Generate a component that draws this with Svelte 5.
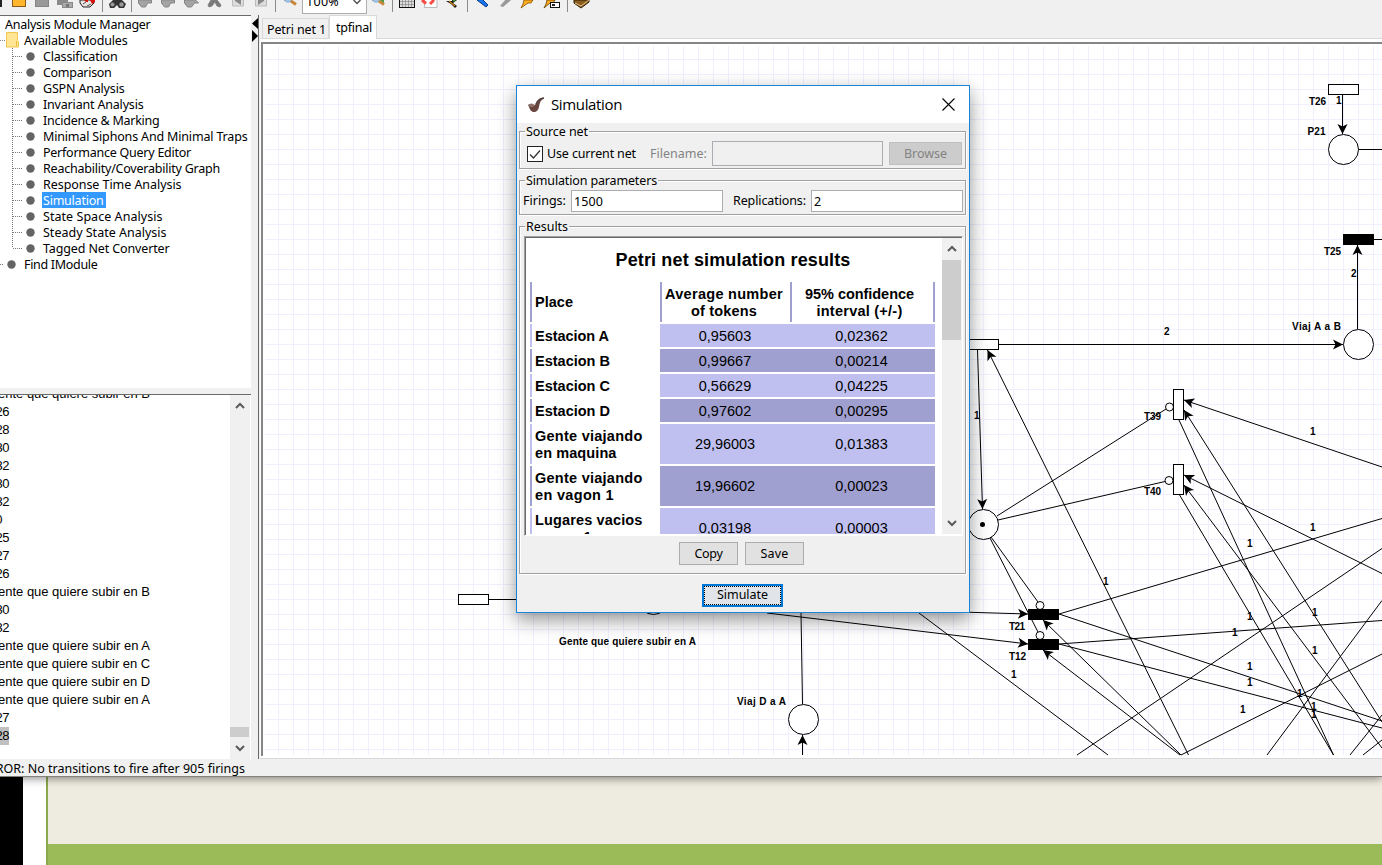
<script>
  // Spreads the letters of a label so that it fills the given width.
  function fit(node, width) {
    const range = document.createRange();
    range.selectNodeContents(node);
    const natural = range.getBoundingClientRect().width;
    node.style.letterSpacing = (width - natural) / node.textContent.length + 'px';
  }

  const modules = [
    ['Classification', 74.5], ['Comparison', 68.5], ['GSPN Analysis', 81.5], ['Invariant Analysis', 100.5],
    ['Incidence & Marking', 116.5], ['Minimal Siphons And Minimal Traps', 204.5], ['Performance Query Editor', 148],
    ['Reachability/Coverability Graph', 177], ['Response Time Analysis', 138.5], ['Simulation', 60.5],
    ['State Space Analysis', 119.5], ['Steady State Analysis', 123.5], ['Tagged Net Converter', 126.5]
  ];

  const q = 'Gente que quiere subir en ';
  const log = [q + 'B', 'T26', 'T28', 'T30', 'T32', 'T30', 'T32', 'T0', 'T25', 'T27', 'T26', q + 'B', 'T30', 'T32',
    q + 'A', q + 'C', q + 'D', q + 'A', 'T27', 'T28'];

  const results = [
    ['Estacion A', '', '0,95603', '0,02362'],
    ['Estacion B', '', '0,99667', '0,00214'],
    ['Estacion C', '', '0,56629', '0,04225'],
    ['Estacion D', '', '0,97602', '0,00295'],
    ['Gente viajando', 'en maquina', '29,96003', '0,01383'],
    ['Gente viajando', 'en vagon 1', '19,96602', '0,00023'],
    ['Lugares vacios', 'vagon 1', '0,03198', '0,00003']
  ];
  const placeWidths = { 'Estacion A': 74, 'Estacion B': 75, 'Estacion C': 75, 'Estacion D': 75, 'Gente viajando': 107.5, 'en maquina': 81.5, 'en vagon 1': 79, 'Lugares vacios': 107.5, 'vagon 1': 57 };

  // Plain arcs: x1, y1, x2, y2
  const lines = [
    [489, 599.5, 517, 599.5], [1358, 149.5, 1382, 149.5], [1374, 239.5, 1382, 239.5],
    [997, 516, 1166, 409], [998, 520, 1165, 481.5], [991, 537, 1038, 602], [990, 538, 1038, 632],
    [1179, 420, 1333.5, 755], [1179, 494, 1333.5, 755], [1059, 614, 1382, 518.5], [1059, 614, 1382, 721],
    [1059, 644, 1382, 728], [1059, 644, 1382, 620.5], [1077, 755, 1382, 548.5], [1181, 755, 1382, 654],
    [1267, 755, 1382, 600.5], [1350, 755, 1382, 715], [1363, 755, 1382, 740], [919, 613, 1108, 755],
    [801, 613, 802.5, 704]
  ];
  // Arcs that end in an arrow head at x2, y2
  const arrows = [
    [1342.5, 94, 1342.5, 134], [1357.5, 329, 1357.5, 245], [999, 344.5, 1343, 344.5], [977.5, 350, 982.5, 509],
    [1188.5, 755, 987.5, 350], [1382, 467, 1184, 400], [1382, 722, 1184, 410], [1382, 573.5, 1184, 475],
    [1382, 748, 1184, 485], [1181, 755, 1043, 620], [1180, 755, 1043, 650], [960, 612, 1028, 614],
    [767, 613, 1028, 644], [802.5, 755, 802.5, 735]
  ];
  const circles = [[1343.5, 149.5], [1358.5, 344.5], [983.5, 524.5], [803.5, 719.5], [653.5, 599.5]];
  const inhibitors = [[1169.5, 407], [1169, 480.5], [1040, 605.5], [1040, 635.5]];
  const boxes = [[1328.5, 84.5, 30, 10], [968.5, 339.5, 30, 10], [458.5, 594.5, 30, 10], [1173.5, 389.5, 10, 30], [1173.5, 464.5, 10, 30]];
  const bars = [[1343, 234], [1028, 609], [1028, 639]];
  const names = [
    ['T26', 1309, 105, 17], ['P21', 1307.5, 135, 18], ['T25', 1324, 255, 17], ['Viaj A a B', 1292, 330, 49],
    ['T39', 1144, 420, 17], ['T40', 1144, 495, 17], ['T21', 1009, 630, 16], ['T12', 1009, 660, 17],
    ['Viaj D a A', 737, 705, 49], ['Gente que quiere subir en A', 559, 645, 137]
  ];
  const weights = [
    ['1', 1336, 104], ['2', 1351, 277], ['2', 1164, 335], ['1', 974, 419], ['1', 1310, 435], ['1', 1310, 531],
    ['1', 1247, 547], ['1', 1103, 585], ['1', 1247, 620], ['1', 1232, 636], ['1', 1312, 616], ['1', 1312, 654],
    ['1', 1247, 670], ['1', 1247, 686], ['1', 1297, 697], ['1', 1311, 710], ['1', 1311, 718], ['1', 1240, 713], ['1', 1011, 678]
  ];
  const heading = ([x1, y1, x2, y2]) => (Math.atan2(y2 - y1, x2 - x1) * 180) / Math.PI;
</script>

<div class="screen">
  <section class="app">
    <header class="toolbar">
      <svg class="tools" width="302" height="14" viewBox="0 0 302 14">
        <path d="M0 0h2v7H0" fill="#222" />
        <rect x="12.5" y="-6" width="13" height="12.5" fill="#ffb52c" stroke="#8a5a18" />
        <rect x="35.5" y="-6" width="13" height="12.5" fill="#999" stroke="#858585" />
        <path d="M57 0h11v2h5v6H62V5h-5z" fill="#8a8a8a" /><path d="M63 3h9v4h-9z" fill="#aaa" /><path d="M66 4h3v3h-3z" fill="#777" />
        <path d="M80 0h14v3l-4 4h-7l-3-4z" fill="#e7e4df" stroke="#222" /><path d="M83 4l3-2m1 4 4-2" stroke="#555" /><path d="M84 0h4v2h-2zM90 0h5v2l-3 2z" fill="#d91010" />
        <path d="M109 4l4-4h9l4 4-2 4h-5l-2-3-3 3h-4z" fill="#333" /><circle cx="112.500" cy="4.500" r="2" fill="#999" /><circle cx="121.500" cy="4.500" r="2.200" fill="#999" />
        <g fill="#a4a4a4" stroke="#858585">
          <path d="M138.500 0h13v3l-4 0-2 4h-4l-3-4zM161.500 0h13v3h-4l-2 4h-4l-3-4zM184.500 0h11l3 3-4 0-3 4h-4l-3-4z" />
          <path d="M211 0h6l4 5-1 2-3-1-2-4-3 4-3 1-1-2z" fill="#777" />
        </g>
        <path d="M232.500 -1v7h11v-7M255.500-1v7h11v-7" fill="#ddd" stroke="#bbb" />
        <path d="M241 0v5l-6-4V0zM258 0v5l6-4V0z" fill="#888" />
        <path d="M284 0q2 3 6 2l2-2z" fill="#b9dcff" stroke="#87a5c4" /><path d="M291 1l5 3.500" stroke="#c98538" stroke-width="3" />
        <path d="M102.500 0v12M131.500 0v12M275.500 0v12" stroke="#8b8b8b" />
      </svg>
      <div class="zoom"><span use:fit={33}>100%</span>
        <svg width="8" height="5" viewBox="0 0 8 5"><path d="M.5 0 4 3.500 7.500 0" fill="none" stroke="#555" stroke-width="1.500" /></svg>
      </div>
      <svg class="tools" width="230" height="14" viewBox="366 0 230 14">
        <path d="M372 0q2 3 6 2l2-2z" fill="#b9dcff" stroke="#87a5c4" /><path d="M379 1l5 3.500" stroke="#c98538" stroke-width="3" /><path d="M380 0h4v3z" fill="#4d9b45" />
        <rect x="399.500" y="-3.500" width="15" height="11" fill="#ddd" stroke="#111" /><path d="M402.500 0v7m3-7v7m3-7v7m3-7v7M400 1.500h14m-14 3h14" stroke="#888" stroke-width=".7" />
        <rect x="424.500" y="-4" width="12.500" height="11.500" fill="#fff" stroke="#bbb" /><path d="M422 0l4 3.500M430 4l4-4" stroke="#fb4b43" stroke-width="3" />
        <path d="M446 1h6V0h5l-4 3 4 3-2 2-4-4z" fill="#111" /><path d="M449 1l6 5" stroke="#cc8428" stroke-width="1.500" /><path d="M452 0h4l-2 2z" fill="#44963b" />
        <path d="M477 0l9 7 2-2-6-6z" fill="#1874e8" stroke="#063c88" />
        <path d="M500 6l6-7h5v1l-8 7z" fill="#999" />
        <path d="M524 0h9l-2 3h-3l-7 5 2-4z" fill="#ffad20" stroke="#815000" stroke-width=".8" />
        <path d="M547 0h8l-2 3h-3l-6 5 2-4z" fill="#ffad20" stroke="#5b3a00" stroke-width=".8" />
        <rect x="550.500" y="2.500" width="9" height="5" fill="#fff" stroke="#111" /><path d="M552 4h3v2h-3z" fill="#222" />
        <path d="M574 0h15v2l-8 6-7-5z" fill="#8a5c1e" stroke="#312009" /><path d="M575 3l6 3 8-6" fill="none" stroke="#e9c98e" />
        <path d="M392.500 0v12M467.500 0v12M567.500 0v12" stroke="#8b8b8b" />
      </svg>
    </header>

    <div class="body">
      <aside class="side">
        <div class="tree">
          <div class="row root"><span use:fit={145.5}>Analysis Module Manager</span></div>
          <div class="row folder">
            <svg width="24" height="16" viewBox="0 0 24 16"><path d="M0 8.500h5" stroke="#888" stroke-dasharray="1 1" /><path d="M6.500.500h11v8l1 1v5.500h-12z" fill="#ffe594" stroke="#efc64e" /><path d="M16.500 9v5" stroke="#edbd35" /></svg>
            <span use:fit={103.5}>Available Modules</span>
          </div>
          {#each modules as [name, width], i}
            <div class="row">
              <svg width="42" height="16" viewBox="0 0 42 16">
                <path d={i === modules.length - 1 ? 'M12.500 0v8' : 'M12.500 0v16'} stroke="#777" stroke-dasharray="1 1" />
                <path d="M13 8.500h9" stroke="#777" stroke-dasharray="1 1" /><circle cx="30.500" cy="8.500" r="4.200" fill="#646464" />
              </svg>
              <span class="module" class:selected={name === 'Simulation'}><span use:fit={width}>{name}</span></span>
            </div>
          {/each}
          <div class="row">
            <svg width="24" height="16" viewBox="0 0 24 16"><path d="M0 8.500h4" stroke="#777" stroke-dasharray="1 1" /><circle cx="11.500" cy="8.500" r="4.200" fill="#646464" /></svg>
            <span use:fit={73.5}>Find IModule</span>
          </div>
        </div>
        <div class="log">
          <div class="entries">
            {#each log as entry, i}
              <div class="entry"><span class:current={i === log.length - 1} use:fit={entry.length > 3 ? 162 : entry.length === 3 ? 21 : 14}>{entry}</span></div>
            {/each}
          </div>
          <div class="scroll">
            <svg width="10" height="7" viewBox="0 0 10 7"><path d="M1 6 5 2 9 6" fill="none" stroke="#5a5a5a" stroke-width="2" /></svg>
            <div class="logthumb"></div>
            <svg width="10" height="7" viewBox="0 0 10 7"><path d="M1 1 5 5 9 1" fill="none" stroke="#5a5a5a" stroke-width="2" /></svg>
          </div>
        </div>
      </aside>

      <div class="splitter">
        <svg width="7" height="26" viewBox="0 0 7 26"><path d="M6 2v11L0 7.500zM0 14v12l6-6z" /></svg>
      </div>

      <main class="work">
        <nav class="tabs">
          <div class="tab"><span use:fit={59}>Petri net 1</span></div>
          <div class="tab active"><span use:fit={36}>tpfinal</span></div>
        </nav>
        <div class="sheet">
          <svg class="net" width="1119" height="712" viewBox="263 44 1119 712">
            <defs>
              <pattern id="grid" x="278" y="59" width="15" height="15" patternUnits="userSpaceOnUse"><path d="M0 .500h15M.500 0v15" stroke="#efefff" /></pattern>
            </defs>
            <rect x="265" y="46" width="1117" height="709" fill="url(#grid)" />
            {#each lines as [x1, y1, x2, y2]}<line {x1} {y1} {x2} {y2} stroke="#000" />{/each}
            {#each arrows as a}
              <line x1={a[0]} y1={a[1]} x2={a[2]} y2={a[3]} stroke="#000" />
              <path d="M0 0-10-5-7.500 0-10 5z" transform="translate({a[2]} {a[3]}) rotate({heading(a)})" />
            {/each}
            {#each circles as [cx, cy]}<circle {cx} {cy} r="15" fill="#fff" stroke="#000" />{/each}
            <circle cx="982.500" cy="524.500" r="2.500" />
            {#each inhibitors as [cx, cy]}<circle {cx} {cy} r="4" fill="#fff" stroke="#000" />{/each}
            {#each boxes as [x, y, width, height]}<rect {x} {y} {width} {height} fill="#fff" stroke="#000" />{/each}
            {#each bars as [x, y]}<rect {x} {y} width="31" height="11" />{/each}
            {#each names as [label, x, y, width]}<text {x} {y} textLength={width}>{label}</text>{/each}
            {#each weights as [label, x, y]}<text {x} {y}>{label}</text>{/each}
          </svg>
        </div>
      </main>
    </div>
    <footer class="status"><span use:fit={264}>ERROR: No transitions to fire after 905 firings</span></footer>
  </section>

  <div class="desktop">
    <div class="dark"></div><div class="page"></div>
    <div class="slide"><div class="green"></div></div>
  </div>

  <div class="dialog">
    <div class="title">
      <svg width="18" height="16" viewBox="0 0 18 16">
        <path d="M1 8 4 6.500 5 9 8 8C10 3 12 .500 17 .500V2C13.500 2.500 12.800 6 12 10 11 14.500 8 16 5 14.500 2.500 13 2.500 10 1 8Z" fill="#69443f" />
        <path d="M1 8l4-1.500 3 1.500-2 2H3z" fill="#8d7069" /><path d="M9 7C11 3 13 1.500 17 1" fill="none" stroke="#4c4544" stroke-width="1.200" />
      </svg>
      <h1 use:fit={71}>Simulation</h1>
      <svg width="13" height="13" viewBox="0 0 13 13"><path d="M.500.500l12 12M12.500.500l-12 12" stroke="#000" stroke-width="1.100" /></svg>
    </div>

    <fieldset class="source">
      <legend><span use:fit={62}>Source net</span></legend>
      <div class="fields">
        <div class="check"><svg width="14" height="14" viewBox="0 0 14 14"><path d="M2 7.500 5.500 11 12 3.500" fill="none" stroke="#333" stroke-width="1.300" /></svg></div>
        <label class="use"><span use:fit={89}>Use current net</span></label>
        <label class="file"><span use:fit={57}>Filename:</span></label>
        <div class="input off"></div>
        <div class="button browse"><span use:fit={43}>Browse</span></div>
      </div>
    </fieldset>

    <fieldset class="params">
      <legend><span use:fit={131}>Simulation parameters</span></legend>
      <div class="fields">
        <label class="firings"><span use:fit={43}>Firings:</span></label>
        <div class="input"><span use:fit={29}>1500</span></div>
        <label class="reps"><span use:fit={73}>Replications:</span></label>
        <div class="input"><span>2</span></div>
      </div>
    </fieldset>

    <fieldset class="results">
      <legend><span use:fit={42}>Results</span></legend>
      <div class="pane">
        <div class="report">
          <h2><span use:fit={235}>Petri net simulation results</span></h2>
          <div class="line head">
            <div class="place"><span use:fit={38}>Place</span></div>
            <div class="cell"><span use:fit={118}>Average number</span><span use:fit={66}>of tokens</span></div>
            <div class="cell last"><span use:fit={109}>95% confidence</span><span use:fit={86}>interval (+/-)</span></div>
          </div>
          {#each results as [a, b, mean, interval], i}
            <div class="line" class:odd={i % 2 === 1} class:tall={b !== ''}>
              <div class="place"><span use:fit={placeWidths[a]}>{a}</span>{#if b}<span use:fit={placeWidths[b]}>{b}</span>{/if}</div>
              <div class="cell"><span use:fit={mean.length * 7.500}>{mean}</span></div>
              <div class="cell last"><span use:fit={52.500}>{interval}</span></div>
            </div>
          {/each}
        </div>
        <div class="bar">
          <svg width="10" height="7" viewBox="0 0 10 7"><path d="M1 6 5 2 9 6" fill="none" stroke="#5a5a5a" stroke-width="2" /></svg>
          <div class="thumb"></div>
          <svg width="10" height="7" viewBox="0 0 10 7"><path d="M1 1 5 5 9 1" fill="none" stroke="#5a5a5a" stroke-width="2" /></svg>
        </div>
      </div>
      <div class="actions">
        <div class="button"><span use:fit={28}>Copy</span></div>
        <div class="button"><span use:fit={28}>Save</span></div>
      </div>
    </fieldset>
    <div class="button simulate"><div class="focus"><span use:fit={51}>Simulate</span></div></div>
  </div>
</div>

<style>
  :global(body) { overflow: hidden; }
  * { box-sizing: border-box; }
  svg { display: block; flex: none; }
  span { white-space: pre; }
  .screen { width: 1382px; height: 865px; position: relative; overflow: hidden; display: flex; flex-direction: column; background: #fff; font: 12.5px/16px "Noto Sans", sans-serif; color: #000; }
  .app { height: 777px; flex: none; display: flex; flex-direction: column; background: #f0f0f0; border-bottom: 1px solid #85827e; box-shadow: 0 1px 9px rgba(0, 0, 0, .5); position: relative; }
  .toolbar { height: 15px; display: flex; align-items: flex-start; }
  .zoom { width: 65px; height: 14px; margin-right: -1px; border: 1px solid #adadad; border-top: 0; background: #fff; display: flex; justify-content: space-between; padding: 0 5px 0 3px; line-height: 3px; overflow: hidden; }
  .body { height: 744px; display: flex; flex: none; }
  .side { width: 251px; display: flex; flex-direction: column; gap: 6px; }
  .tree { height: 373px; background: #fff; border-top: 1px solid #696969; }
  .row { height: 16px; display: flex; align-items: flex-start; line-height: 18px; }
  .root { padding-left: 5px; }
  .module { padding: 0 1px; height: 16px; }
  .selected { background: #3399ff; color: #fff; padding-right: 2px; }
  .log { height: 365px; background: #fff; border-top: 1px solid #696969; display: flex; justify-content: space-between; }
  .entries { width: 228px; overflow: hidden; font: 13px/18px "Liberation Sans", sans-serif; }
  .entries .entry:first-child { margin-top: -10px; }
  .entry { height: 18px; margin-left: -12px; }
  .current { background: #c0c0c0; display: inline-block; }
  .scroll { width: 20px; margin-right: 1px; background: #f0f0f0; display: flex; flex-direction: column; align-items: center; padding: 7px 1px 7px 0; }
  .logthumb { width: 19px; height: 11px; background: #cdcdcd; margin: 318px 0 8px; }
  .splitter { width: 8px; border-right: 1px solid #696969; padding: 1px 0 0 1px; }
  .work { flex: 1; min-width: 0; padding-left: 1px; display: flex; flex-direction: column; }
  .tabs { height: 24px; display: flex; align-items: flex-end; padding: 0 0 0 2px; box-shadow: inset 0 -1px 0 #d9d9d9; }
  .tab { height: 21px; width: 67px; border: 1px solid #d9d9d9; padding: 3px 0 0 4px; }
  .tab.active { width: 48px; height: 24px; background: #fff; border-bottom: 0; padding: 4px 0 0 6px; }
  .sheet { height: 720px; background: #fff; border-bottom: 1px solid #d9d9d9; padding: 3px 0 0 1px; display: flex; }
  .net { box-sizing: content-box; border: 2px solid #858585; border-width: 2px 0 0 2px; font: bold 10px "Liberation Sans", sans-serif; }
  .status { height: 17px; line-height: 19px; margin-left: -19px; }

  .desktop { flex: 1; display: flex; }
  .dark { width: 23px; background: #000; }
  .page { width: 23px; background: #fff; }
  .slide { flex: 1; border-left: 2px solid #8aa84e; background: #eeebe0; display: flex; align-items: flex-end; }
  .green { width: 100%; height: 21px; background: #9bbb59; }

  .dialog { position: absolute; left: 516px; top: 85px; width: 454px; height: 528px; border: 1px solid #1883d7; background: #f0f0f0; box-shadow: 0 7px 18px rgba(0, 0, 0, .42); display: flex; flex-direction: column; }
  .title { height: 37px; background: #fff; display: flex; align-items: center; padding: 0 14px 0 10px; flex: none; }
  h1 { margin: 0 auto 0 6px; padding-bottom: 2px; font: 15px/20px "Open Sans", sans-serif; }
  fieldset { margin: 0 2px; padding: 0; border: 1px solid #a0a0a0; box-shadow: 1px 1px 0 #fff, inset 1px 1px 0 #fff; min-width: 0; flex: none; width: 447px; }
  legend { margin-left: 5px; padding: 0 1px; height: 16px; line-height: 18px; }
  .source { height: 46px; }
  .params { height: 43px; margin-top: 3px; }
  .results { height: 356px; margin-top: 3px; }
  .fields { display: flex; align-items: center; }
  .source .fields { padding: 2px 2px 0 7px; }
  .params .fields { padding: 2px 1px 0 3px; line-height: 18px; }
  .check { width: 16px; height: 16px; border: 1px solid #222; background: #fff; flex: none; }
  .use { width: 107px; padding-left: 4px; flex: none; }
  .file { width: 62px; color: #838383; flex: none; }
  .input { width: 152px; height: 22px; border: 1px solid #abadb3; background: #fff; padding: 2px; flex: none; }
  .off { width: 171px; height: 25px; background: #f0f0f0; }
  .firings { width: 48px; flex: none; }
  .reps { width: 88px; padding-left: 10px; flex: none; }
  .button { width: 59px; height: 23px; border: 1px solid #adadad; background: #e1e1e1; display: flex; align-items: center; justify-content: center; }
  .browse { width: 73px; margin-left: 6px; background: #ccc; border-color: #bfbfbf; color: #838383; flex: none; }
  .pane { margin: 2px 2px 0 4px; width: 439px; height: 300px; border: 1px solid; border-color: #a0a0a0 #fff #fff #a0a0a0; box-shadow: inset 1px 1px 0 #696969; background: #fff; display: flex; padding: 1px; overflow: hidden; }
  .report { width: 416px; height: 296px; overflow: hidden; font: 14.500px/17px "Liberation Sans", sans-serif; padding-left: 4px; flex: none; }
  h2 { margin: 0; height: 44px; padding: 12px 6px 0 0; font: bold 18px/21px "Liberation Sans", sans-serif; text-align: center; }
  .line { height: 23px; margin-bottom: 2px; display: flex; width: 405px; --tone: #c0c0f0; }
  .odd { --tone: #a0a0d0; }
  .tall { height: 40px; }
  .place { width: 130px; border-left: 2px solid var(--tone); padding: 2px 0 0 3px; font-weight: bold; display: flex; flex-direction: column; justify-content: center; align-items: flex-start; }
  .cell { width: 130px; background: var(--tone); display: flex; flex-direction: column; justify-content: center; align-items: center; padding-top: 1px; }
  .last { width: 145px; padding-right: 2px; }
  .head { height: 40px; --tone: #a0a0d0; font-weight: bold; }
  .head .place { padding-top: 0; }
  .head .cell { background: none; border-left: 2px solid var(--tone); padding: 2px 5px 0 1px; }
  .head .last { border-right: 2px solid var(--tone); padding-right: 7px; }
  .bar { width: 20px; background: #f0f0f0; display: flex; flex-direction: column; align-items: center; padding: 7px 1px 7px 0; flex: none; }
  .thumb { width: 19px; height: 80px; background: #cdcdcd; margin: 8px 0 180px; flex: none; }
  .actions { display: flex; justify-content: center; gap: 7px; margin: 6px 2px 0 0; }
  .simulate { width: 81px; margin: 10px 0 0 185px; flex: none; border: 2px solid #0078d7; padding: 0; background: #e1e5ea; }
  .focus { width: 100%; height: 100%; border: 1px dotted #000; display: flex; align-items: center; justify-content: center; padding-bottom: 2px; }
</style>
